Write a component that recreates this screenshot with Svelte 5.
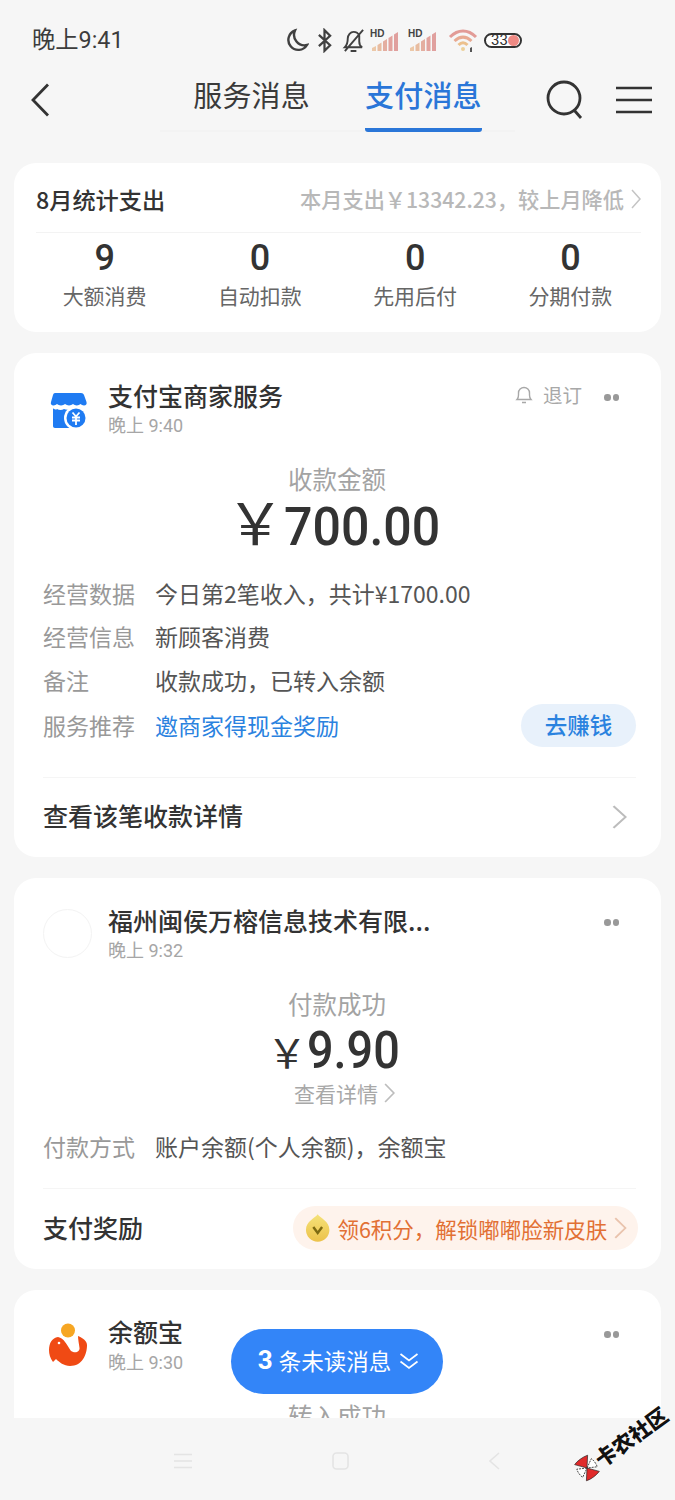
<script>
  const statItems = [
    { n: 9, label: '大额消费' },
    { n: 0, label: '自动扣款' },
    { n: 0, label: '先用后付' },
    { n: 0, label: '分期付款' }
  ];
</script>

{#snippet signal()}
  <span class="signal">
    <b class="hd">HD</b>
    <svg viewBox="0 0 27 20" width="27" height="20">
      <path d="M1 20v-3l4-2v5z" fill="#ecc8a8" />
      <path d="M6.500 20v-6l4-2.500V20z" fill="#e8bca0" />
      <path d="M12 20V10.500l4-2.500V20z" fill="#e4aea0" />
      <path d="M17.500 20V7l4-2.500V20z" fill="#e2a39e" />
      <path d="M23 20V3.500l4-2.500v19z" fill="#e0a09e" />
    </svg>
  </span>
{/snippet}

{#snippet dots()}
  <span class="dots"><i></i><i></i></span>
{/snippet}

{#snippet chev(w, h, color)}
  <svg class="chev" viewBox="0 0 10 20" width={w} height={h} preserveAspectRatio="none" fill="none" stroke={color} stroke-width="1.500">
    <path d="M1 1l8 9-8 9" />
  </svg>
{/snippet}

<div class="phone">
  <div class="status">
    <span class="time">晚上9:41</span>
    <div class="status-icons">
      <svg class="i-moon" viewBox="0 0 24 24" width="24" height="24" fill="none" stroke="#404040" stroke-width="2.400">
        <path d="M10 2.500A10 10 0 1 0 22 17 10.500 10.500 0 0 1 10 2.500z" />
      </svg>
      <svg class="i-bt" viewBox="0 0 16 26" width="15" height="25" fill="none" stroke="#404040" stroke-width="2.400">
        <path d="M2 7l12 11-6 6V2l6 6L2 19" />
      </svg>
      <svg class="i-bell" viewBox="0 0 24 26" width="23" height="25" fill="none" stroke="#404040" stroke-width="2">
        <path d="M3 20c2-2 3-4 3-9 0-4 3-7 6-7s5 1.500 6 4v6c0 3 1 5 3 6zM9 24h6M3 24L22 2" />
      </svg>
      {@render signal()}
      {@render signal()}
      <span class="wifi">
        <svg viewBox="0 0 30 24" width="30" height="24" fill="none" stroke-width="3">
          <path d="M2 9c8-8 18-8 26 0" stroke="#e29b96" />
          <path d="M6.500 13c5.500-5 11.500-5 17 0" stroke="#e8aa92" />
          <path d="M10.500 17c3-3 6-3 9 0" stroke="#ecc08c" />
          <circle cx="15" cy="21" r="2" fill="#ecd09a" stroke="none" />
          <path d="M22 24v-4l2-1v5z" fill="#555" stroke="none" />
        </svg>
      </span>
      <span class="battery"><span class="cap"></span><span class="pct">33</span></span>
    </div>
  </div>

  <header class="nav">
    <button class="back" aria-label="返回">
      <svg viewBox="0 0 20 34" width="20" height="34" fill="none" stroke="#333" stroke-width="2.800">
        <path d="M18 1.500L3 17l15 15.500" />
      </svg>
    </button>
    <div class="tabs">
      <span class="tab">服务消息</span>
      <span class="tab active">支付消息</span>
    </div>
    <div class="nav-tools">
      <svg viewBox="0 0 38 40" width="38" height="40" fill="none" stroke="#333" stroke-width="2.800">
        <circle cx="18" cy="18" r="16" />
        <path d="M28 30l7 8" />
      </svg>
      <svg class="menu" viewBox="0 0 36 28" width="36" height="28" fill="none" stroke="#333" stroke-width="2.600">
        <path d="M0 2h36M0 14h36M0 26h36" />
      </svg>
    </div>
  </header>

  <main class="list">
    <section class="card stats">
      <div class="stats-head">
        <strong>8月统计支出</strong>
        <span class="stats-sum">本月支出￥13342.23，较上月降低 {@render chev(10, 20, '#c4c4c4')}</span>
      </div>
      <div class="stats-grid">
        {#each statItems as s}
          <div class="stat"><b>{s.n}</b><span>{s.label}</span></div>
        {/each}
      </div>
    </section>

    <section class="card msg first">
      <div class="msg-head">
        <svg class="logo" viewBox="0 0 60 60" width="60" height="60">
          <path d="M15 13h26c1.500 0 2.500.8 3 2l2.500 7c.6 2-.5 3.500-2.500 3.500-1.500 0-2.500-1-3.500-1.500-1 .5-2.200 1.500-3.700 1.500S34 24.500 33 24c-1 .5-2.500 1.500-4 1.500S26.300 24.500 25 24c-1 .5-2.300 1.500-4 1.500S18 24.500 17 24c-1 .5-2 1.500-3.500 1.500-2 0-3.200-1.500-2.500-3.500l2-7c.4-1.200 1-2 2-2z" fill="#1f7bf2" />
          <path d="M13 28.500c2 .8 3 1.500 4 .5 2 1.200 5 1.200 7 0 2 1 5 1 7 0 1 .5 3 1 5 .8V48H15c-1.200 0-2-.8-2-2z" fill="#1f7bf2" />
          <rect x="30" y="38" width="12" height="10" fill="#1f7bf2" />
          <circle cx="36" cy="38" r="12" fill="#fff" />
          <circle cx="36" cy="38" r="9.500" fill="#1f7bf2" />
          <path d="M32.500 32.500l3.500 4 3.500-4M32 37.500h8M32 40.500h8M36 37v8" stroke="#fff" stroke-width="1.800" fill="none" />
        </svg>
        <div class="who">
          <h2>支付宝商家服务</h2>
          <time>晚上 9:40</time>
        </div>
        <span class="sub">
          <svg viewBox="0 0 18 20" width="18" height="20" fill="none" stroke="#a8a8a8" stroke-width="1.400">
            <path d="M2 14.500c1-1 1.500-2 1.500-4.500V8a5.500 5.500 0 0 1 11 0v2c0 2.500.5 3.500 1.500 4.500zM7 17.500h4" />
          </svg>
          退订
        </span>
        {@render dots()}
      </div>
      <div class="amount-label">收款金额</div>
      <div class="amount big"><span class="yen">￥</span><span class="num">700.00</span></div>
      <dl class="rows">
        <div class="row"><dt>经营数据</dt><dd>今日第2笔收入，共计¥1700.00</dd></div>
        <div class="row"><dt>经营信息</dt><dd>新顾客消费</dd></div>
        <div class="row"><dt>备注</dt><dd>收款成功，已转入余额</dd></div>
        <div class="row promo"><dt>服务推荐</dt><dd class="link">邀商家得现金奖励</dd><button class="earn">去赚钱</button></div>
      </dl>
      <div class="detail-foot">
        <strong>查看该笔收款详情</strong>
        {@render chev(15, 24, '#bcbcbc')}
      </div>
    </section>

    <section class="card msg second">
      <div class="msg-head">
        <span class="blank-logo"></span>
        <div class="who">
          <h2>福州闽侯万榕信息技术有限...</h2>
          <time>晚上 9:32</time>
        </div>
        {@render dots()}
      </div>
      <div class="amount-label">付款成功</div>
      <div class="amount mid"><span class="yen">￥</span><span class="num">9.90</span></div>
      <div class="see">查看详情{@render chev(11, 20, '#bdbdbd')}</div>
      <dl class="rows single">
        <div class="row"><dt>付款方式</dt><dd>账户余额(个人余额)，余额宝</dd></div>
      </dl>
      <div class="reward-foot">
        <strong>支付奖励</strong>
        <span class="reward">
          <svg viewBox="0 0 26 30" width="26" height="30">
            <defs>
              <linearGradient id="drop" x1="0" y1="0" x2="0" y2="1">
                <stop offset="0" stop-color="#f5e27a" />
                <stop offset="1" stop-color="#ecc24a" />
              </linearGradient>
            </defs>
            <path d="M13 1c2.500 4 12 7 12 16a12 12 0 0 1-24 0C1 8 10.500 5 13 1z" fill="url(#drop)" />
            <path d="M8.500 14l4.500 6 4.500-6" fill="none" stroke="#7d6a12" stroke-width="2.500" />
          </svg>
          <span class="reward-text">领6积分，解锁嘟嘟脸新皮肤</span>
          {@render chev(13, 22, '#e9c3ad')}
        </span>
      </div>
    </section>

    <section class="card msg third">
      <div class="msg-head">
        <svg class="logo" viewBox="0 0 60 60" width="60" height="60">
          <path d="M18 22c6 1 9 8 13 14 5 3 9 0 8.500-3C39 29 38 24 38 21c5 2 9 5 9 9 0 10-5 21-17 21-6 0-11-4-14-7l-3 3c-3-4-4-8-4-12 0-7 3-12 9-13z" fill="#f04a14" />
          <circle cx="28" cy="15.500" r="7" fill="#f6a623" />
          <circle cx="19" cy="28" r="1.300" fill="#fff" />
        </svg>
        <div class="who">
          <h2>余额宝</h2>
          <time>晚上 9:30</time>
        </div>
        {@render dots()}
      </div>
      <div class="amount-label">转入成功</div>
    </section>
  </main>

  <div class="bottom">
    <svg viewBox="0 0 18 16" width="18" height="16" fill="none" stroke="#e4e4e4" stroke-width="1.600">
      <path d="M0 1.500h18M0 8h18M0 14.500h18" />
    </svg>
    <svg viewBox="0 0 17 18" width="17" height="18" fill="none" stroke="#e4e4e4" stroke-width="1.600">
      <rect x="1" y="1" width="15" height="16" rx="3.500" />
    </svg>
    <svg viewBox="0 0 11 18" width="11" height="18" fill="none" stroke="#e4e4e4" stroke-width="1.600">
      <path d="M10 1L1 9l9 8" />
    </svg>
  </div>

  <button class="unread">
    <b>3</b> 条未读消息
    <svg viewBox="0 0 20 18" width="20" height="19" fill="none" stroke="#fff" stroke-width="1.700">
      <path d="M1.500 1.500L10 8l8.500-6.500M1.500 9L10 15.500 18.500 9" />
    </svg>
  </button>

  <div class="mark">
    <svg viewBox="0 0 24 24" width="24" height="24">
      <path d="M12 12L3 7c-1 3-1 7 0 10zM12 12l9-5c1 3 1 7 0 10z" fill="#fff" stroke="#333" stroke-width=".8" stroke-dasharray="2 1" />
      <path d="M12 12L4 2c4-1.500 11-1.500 16 0zM12 12l-8 10c4 1.500 11 1.500 16 0z" fill="#e02a2a" stroke="#222" stroke-width=".6" />
    </svg>
    <span>卡农社区</span>
  </div>
</div>

<style>
  :global(body) {
    margin: 0;
    background: #f6f6f6;
  }
  .phone {
    position: relative;
    width: 675px;
    height: 1500px;
    overflow: hidden;
    background: #f6f6f6;
    display: flex;
    flex-direction: column;
    font-family: "Noto Sans CJK SC", "Noto Sans", sans-serif;
    color: #333;
  }
  .status {
    height: 60px;
    padding: 22px 0 0 32px;
    box-sizing: border-box;
    position: relative;
    display: flex;
  }
  .time {
    font-size: 23.300px;
    line-height: 36px;
    color: #3c3c3c;
    font-family: Roboto, "Noto Sans CJK SC", sans-serif;
  }
  .status-icons {
    position: absolute;
    left: 285px;
    top: 27px;
    display: flex;
    align-items: center;
    height: 26px;
  }
  .i-bt { margin-left: 8px; }
  .i-bell { margin-left: 10px; }
  .signal {
    position: relative;
    width: 28px;
    height: 24px;
    display: block;
    margin-left: 5px;
  }
  .signal + .signal { margin-left: 10px; }
  .signal svg {
    position: absolute;
    right: 0;
    bottom: 1px;
  }
  .hd {
    position: absolute;
    left: 0;
    top: 1px;
    font: 700 10px/10px "Liberation Sans", sans-serif;
    color: #444;
  }
  .wifi { display: block; height: 24px; margin-left: 12px; }
  .battery {
    position: relative;
    display: block;
    width: 38px;
    height: 15px;
    border: 2px solid #333;
    border-radius: 9px;
    box-sizing: border-box;
    background: #fff;
    margin-left: 6px;
  }
  .pct {
    position: absolute;
    left: 5px;
    top: 0;
    font: 400 15px/11px Roboto, sans-serif;
    color: #333;
  }
  .cap {
    position: absolute;
    right: 1px;
    top: 0;
    bottom: 0;
    width: 11px;
    background: #ef8a84;
    border-radius: 6px;
  }
  .nav {
    height: 78px;
    position: relative;
    display: flex;
    align-items: flex-start;
    flex: none;
  }
  .back {
    position: absolute;
    left: 30px;
    top: 23px;
    padding: 0;
    border: 0;
    background: none;
    line-height: 0;
  }
  .tabs {
    position: absolute;
    left: 160px;
    right: 160px;
    top: 14px;
    height: 58px;
    display: flex;
    justify-content: center;
    gap: 55px;
    background: linear-gradient(to bottom, transparent 56px, #f3f3f3 56px);
  }
  .tab {
    font-size: 29px;
    line-height: 40px;
    letter-spacing: 0.2px;
    color: #3a3a3a;
    height: 58px;
    box-sizing: border-box;
    position: relative;
  }
  .tab.active {
    color: #2a76d8;
    font-weight: 500;
    border-bottom: 4px solid #2a76d8;
    border-radius: 0 0 3px 3px;
  }
  .nav-tools {
    position: absolute;
    left: 546px;
    top: 20px;
    display: flex;
    gap: 32px;
  }
  .menu { margin-top: 6px; }
  .list {
    flex: none;
    height: 1280px;
    overflow: hidden;
    padding: 25px 14px 0;
    box-sizing: border-box;
    display: flex;
    flex-direction: column;
    gap: 21px;
  }
  .card {
    background: #fff;
    border-radius: 22px;
    flex: none;
  }
  .stats {
    height: 169px;
    padding: 0 20px 0 22px;
    box-sizing: border-box;
  }
  .stats-head {
    height: 70px;
    box-sizing: border-box;
    padding-top: 2px;
    display: flex;
    justify-content: space-between;
    align-items: center;
    border-bottom: 1px solid #f3f3f3;
  }
  .stats-head strong {
    font-weight: 500;
    color: #333;
    font-size: 23.200px;
  }
  .stats-sum {
    display: flex;
    align-items: center;
    gap: 7px;
    color: #b8b8b8;
    font-size: 21.200px;
    font-weight: 500;
  }
  .stats-grid {
    display: grid;
    grid-template-columns: repeat(4, 1fr);
    margin: 2px -7px 0 -9px;
    text-align: center;
  }
  .stat {
    display: flex;
    flex-direction: column;
    align-items: center;
  }
  .stat b {
    font: 500 36px/46px Roboto, sans-serif;
    color: #333;
  }
  .stat span {
    font-size: 21px;
    line-height: 28px;
    color: #666;
  }
  .msg { padding: 0 25px 0 29px; }
  .first { height: 504px; box-sizing: border-box; }
  .second { height: 391px; box-sizing: border-box; }
  .third { height: 200px; box-sizing: border-box; }
  .msg-head {
    display: flex;
    align-items: flex-start;
    padding-top: 24px;
    height: 84px;
    box-sizing: border-box;
    position: relative;
  }
  .logo { margin: 3px 8px 0 -3px; flex: none; }
  .third .logo { margin-top: 1px; }
  .third h2 { margin-top: -1px; }
  .third time { margin-top: 1px; }
  .blank-logo {
    width: 49px;
    height: 49px;
    box-sizing: border-box;
    border: 1px solid #f3f3f3;
    border-radius: 50%;
    margin: 7px 16px 0 0;
    flex: none;
  }
  .who { flex: 1; }
  h2 {
    margin: 0;
    font-size: 25px;
    line-height: 36px;
    font-weight: 500;
    color: #333;
  }
  time {
    display: block;
    font-size: 18px;
    line-height: 26px;
    color: #a6a6a6;
    font-family: Roboto, "Noto Sans CJK SC", sans-serif;
  }
  .sub {
    display: flex;
    align-items: center;
    gap: 10px;
    font-size: 19.500px;
    line-height: 36px;
    color: #a8a8a8;
    margin-right: 22px;
  }
  .dots {
    display: flex;
    gap: 2px;
    margin: 17px 0 0;
    padding-right: 17px;
  }
  .dots i {
    width: 6.500px;
    height: 6.500px;
    border-radius: 50%;
    background: #999;
  }
  .amount-label {
    text-align: center;
    font-size: 24.500px;
    line-height: 36px;
    color: #a3a3a3;
    margin: 24px 0 0 -5px;
  }
  .amount {
    text-align: center;
    font-family: Roboto, sans-serif;
    font-weight: 500;
    color: #333;
    margin-left: -12px;
    white-space: nowrap;
  }
  .num {
    display: inline-block;
    transform-origin: left center;
  }
  .amount.big {
    font-size: 53px;
    line-height: 60px;
    margin-top: -7px;
  }
  .big .num { transform: scaleX(.945); margin-right: -9px; }
  .amount.mid {
    font-size: 52px;
    line-height: 54px;
    margin-top: 2px;
  }
  .mid .num { transform: scaleX(.9); margin-right: -10px; }
  .yen {
    font-family: "Noto Sans CJK SC", sans-serif;
    font-weight: 400;
  }
  .big .yen { font-size: 58px; line-height: 60px; }
  .mid .yen { font-size: 40px; line-height: 54px; }
  .rows { margin: 0; padding-top: 14px; }
  .rows.single { padding-top: 23px; }
  .row {
    display: flex;
    align-items: center;
    height: 43.500px;
    font-size: 23px;
    color: #555;
  }
  .row dt {
    width: 112px;
    color: #999;
    flex: none;
  }
  .row dd { margin: 0; flex: 1; }
  .row dd.link { color: #2a82df; }
  .promo { height: 47px; }
  .earn {
    width: 115px;
    height: 43px;
    border: 0;
    border-radius: 22px;
    background: #e8f1fb;
    color: #2a82df;
    font: 500 22.500px "Noto Sans CJK SC", sans-serif;
    padding: 0 0 2px;
  }
  .detail-foot, .reward-foot {
    display: flex;
    justify-content: space-between;
    align-items: center;
    border-top: 1px solid #f5f5f5;
    margin-top: 28px;
    height: 80px;
  }
  .detail-foot strong, .reward-foot strong {
    font-size: 25px;
    font-weight: 500;
    color: #333;
    margin-bottom: 5px;
  }
  .detail-foot .chev { margin: 0 9px 2px 0; }
  .see {
    display: flex;
    justify-content: center;
    align-items: center;
    gap: 6px;
    font-size: 21px;
    line-height: 28px;
    color: #a8a8a8;
    margin: 1px 0 0 10px;
  }
  .rows.single .row { height: 32px; }
  .second .reward-foot { margin-top: 26px; }
  .reward {
    display: flex;
    align-items: center;
    height: 44px;
    box-sizing: border-box;
    width: 345px;
    margin: 0 -2px 2px 0;
    padding: 0 11px 0 12px;
    border-radius: 22px;
    background: #fef3ec;
    color: #e27034;
    font-size: 21.500px;
    gap: 7px;
    white-space: nowrap;
  }
  .reward-text { flex: 1; }
  .unread {
    position: absolute;
    left: 231px;
    top: 1329px;
    width: 212px;
    height: 65px;
    border: 0;
    border-radius: 33px;
    background: #3385f8;
    color: #fff;
    font: 400 22.500px "Noto Sans CJK SC", sans-serif;
    display: flex;
    align-items: center;
    justify-content: center;
    gap: 6px;
    padding: 0 0 3px 3px;
  }
  .unread svg { margin: 2px 0 0 2px; }
  .unread b {
    font: 700 26px Roboto, sans-serif;
  }
  .bottom {
    flex: none;
    height: 82px;
    background: #f6f6f6;
    position: relative;
    display: flex;
    align-items: center;
    justify-content: space-between;
    padding: 4px 175px 0 174px;
    box-sizing: border-box;
  }
  .mark {
    position: absolute;
    left: 575px;
    top: 1456px;
    height: 24px;
    display: flex;
    align-items: center;
    transform: rotate(-36deg);
    transform-origin: 12px 12px;
    color: #111;
    font-size: 21px;
    line-height: 24px;
    font-weight: 900;
    white-space: nowrap;
    text-shadow: .5px .5px 0 #fff, -.5px -.5px 0 #fff;
  }
</style>
